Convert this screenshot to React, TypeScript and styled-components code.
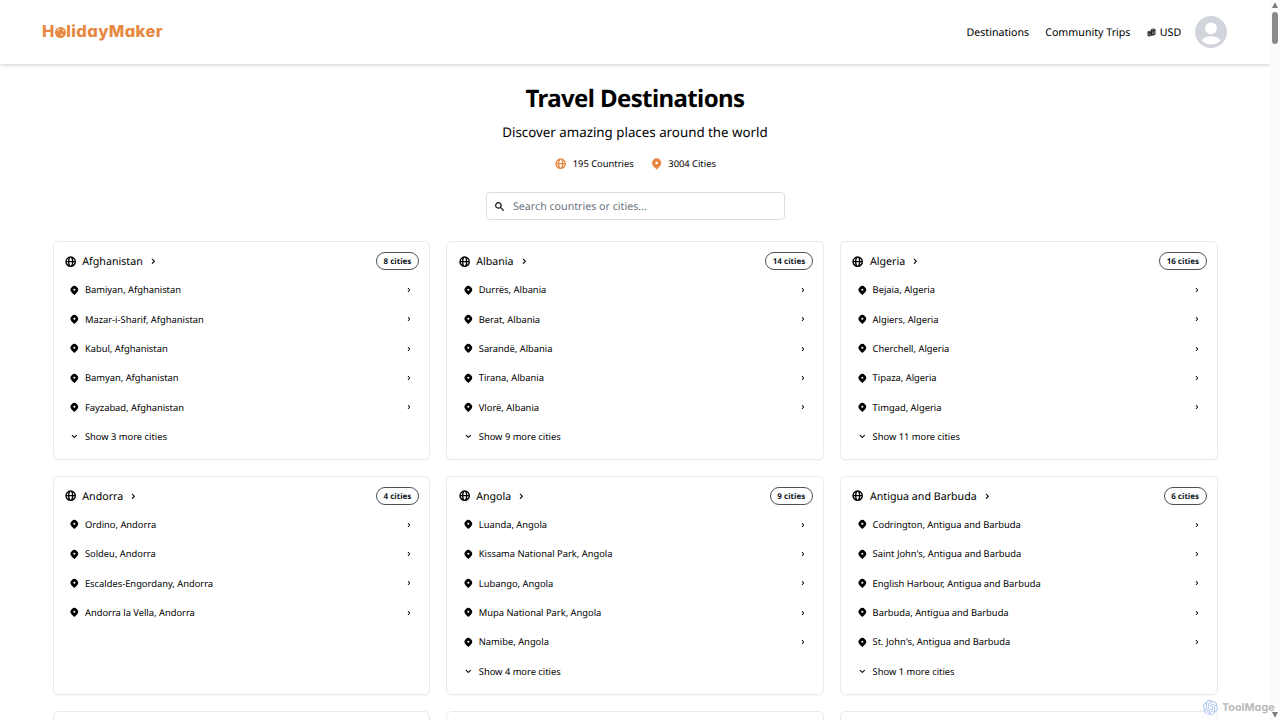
import React from "react";
import styled, { createGlobalStyle } from "styled-components";
import { HiGlobeAlt, HiLocationMarker, HiChevronRight, HiChevronDown, HiSearch } from "react-icons/hi";
import { SiOpenai } from "react-icons/si";

const Global = createGlobalStyle`
  *{box-sizing:border-box}
  html,body{margin:0;height:100%;overflow:hidden;background:#fff}
  body{font-family:"Noto Sans",sans-serif;color:#000;text-rendering:geometricPrecision}
  svg{display:block;flex:none}
`;
const Window = styled.div`display:flex;height:720px;width:1280px;position:relative;overflow:hidden;`;
const Page = styled.div`flex:1;min-width:0;height:720px;overflow:hidden;background:#fff;`;
const Scrollbar = styled.aside`
  width:10px;height:720px;background:#fcfcfc;display:flex;flex-direction:column;align-items:center;
  padding:3px 0;
`;
const Thumb = styled.div`width:6px;height:32px;border-radius:3px;background:#8b8b8b;margin:4px 0 auto;`;
const Header = styled.header`
  height:64px;display:flex;align-items:center;justify-content:space-between;
  padding:0 43px 0 42px;box-shadow:0 1px 4px rgba(0,0,0,.2);
`;
const Logo = styled.div`
  display:flex;align-items:center;font:800 16.5px/24px Inter,sans-serif;color:#e78842;letter-spacing:.38px;
  font-feature-settings:"cv11";padding-bottom:2px;
  svg{margin:2px .5px 0 0}
`;
const Nav = styled.nav`display:flex;align-items:center;gap:16px;font-size:10.67px;line-height:16px;`;
const NavText = styled.span`padding-top:2px;`;
const Currency = styled.span`display:flex;align-items:center;gap:3.7px;margin:0 -2.2px 0 .6px;`;
const Hero = styled.section`display:flex;flex-direction:column;align-items:center;padding-top:19px;`;
const Title = styled.h1`margin:0;font-size:24px;line-height:32px;font-weight:700;letter-spacing:-.6px;`;
const Subtitle = styled.p`margin:7px 0 0;font-size:13.33px;line-height:20px;`;
const Stats = styled.div`display:flex;gap:16px;margin-top:14px;font-size:9.33px;line-height:16px;`;
const Stat = styled.div`display:flex;align-items:center;gap:5.33px;svg{color:#e78842}`;
const Search = styled.div`
  width:299px;height:28px;margin-top:20px;border:1px solid #dcdee2;border-radius:4px;
  display:flex;align-items:center;gap:8.5px;padding-left:7px;font-size:10.67px;line-height:16px;color:#6b7280;
  svg{color:#000}
  span{padding-top:1px}
`;
const Grid = styled.main`
  display:grid;grid-template-columns:repeat(3,1fr);gap:16px;padding:0 52px 0 52.5px;margin-top:21.3px;
  grid-auto-rows:218.67px;
`;
const Card = styled.article`
  border:1px solid #e8eaed;border-radius:5.33px;padding:10px 10.3px 0;
  box-shadow:0 1px 1px rgba(0,0,0,.03);
`;
const CardHead = styled.header`display:flex;align-items:center;justify-content:space-between;height:18px;margin-bottom:5px;`;
const Country = styled.h2`
  display:flex;align-items:center;margin:0;font-size:10.67px;line-height:16px;font-weight:400;gap:5.2px;
  span{padding-top:1.8px}
`;
const Badge = styled.span`
  height:18px;border:1px solid #4b4f58;border-radius:9px;padding:0 6.67px;
  font-size:8px;line-height:17px;font-weight:700;color:#111827;
`;
const City = styled.div`
  display:flex;align-items:center;height:29.33px;padding:0 6px 0 5.3px;font-size:9.33px;gap:5.2px;
  span{flex:1}
`;
const Watermark = styled.div`
  position:absolute;left:1203px;top:699px;display:flex;align-items:center;gap:4px;
  font:700 10.8px/16px Inter,sans-serif;font-feature-settings:"cv11";color:#b9b9b9;white-space:nowrap;
  span{padding-top:1px}
  svg{color:#a9c3f3}
`;

const data: [string, number, string[]][] = [
  ["Afghanistan", 8, ["Bamiyan", "Mazar-i-Sharif", "Kabul", "Bamyan", "Fayzabad"]],
  ["Albania", 14, ["Durrës", "Berat", "Sarandë", "Tirana", "Vlorë"]],
  ["Algeria", 16, ["Bejaia", "Algiers", "Cherchell", "Tipaza", "Timgad"]],
  ["Andorra", 4, ["Ordino", "Soldeu", "Escaldes-Engordany", "Andorra la Vella"]],
  ["Angola", 9, ["Luanda", "Kissama National Park", "Lubango", "Mupa National Park", "Namibe"]],
  ["Antigua and Barbuda", 6, ["Codrington", "Saint John's", "English Harbour", "Barbuda", "St. John's"]],
];

const LogoGlobe = () => (
  <svg width="11" height="11" viewBox="0 0 22 22">
    <circle cx="11" cy="11" r="11" fill="#e78842" />
    <path d="M4 6 8 3l2.500 1-2 2-2.500 1-1.500 1.500z" fill="#fbe3d0" />
    <path d="M14 4l3.500 2 1.500 4-2.500-1z" fill="#fbe3d0" />
    <path d="M11.500 14l3-.5 1.500 1.500-2.500 3-1.500-1.500z" fill="#fbe3d0" />
  </svg>
);
const Coins = () => (
  <svg width="9" height="9" viewBox="0 0 18 18">
    <path d="M7.500 3.500Q8 1 12 .8T17 2.500V12Q16 15 8 15.500z" fill="#222" />
    <path d="M1 8Q2 5.500 5 5.500T8.500 7V14.500Q7 17 4.500 17T1 15.500z" fill="#222" />
    <path d="M9.500 3.800q3-1.600 5.500-.8M11.500 7v6M14.500 6v6M3 8q2-1 4-.5M3.500 11v4M6.300 11v4" fill="none" stroke="#fff" strokeWidth="1" />
  </svg>
);
const Avatar = () => (
  <svg width="32" height="32" viewBox="0 0 32 32">
    <circle cx="16" cy="16" r="16" fill="#d1d5db" />
    <circle cx="16" cy="12.300" r="5.900" fill="#fff" />
    <path d="M6.700 24.500C8.500 21.500 12 20.200 16 20.200s7.500 1.300 9.300 4.300C23 27.200 19.800 28.500 16 28.500S9 27.200 6.700 24.500z" fill="#fff" />
  </svg>
);
const Arrow = ({ down }: { down?: boolean }) => (
  <svg width="6" height="5" viewBox="0 0 6 5"><path d={down ? "M0 0h6L3.500 5h-1z" : "M0 5h6L3.500 0h-1z"} fill="#7d7d7d" /></svg>
);

export default function App() {
  return (
    <Window>
      <Global />
      <Page>
        <Header>
          <Logo>H<LogoGlobe />lidayMaker</Logo>
          <Nav>
            <NavText>Destinations</NavText>
            <NavText>Community Trips</NavText>
            <Currency><Coins /><NavText>USD</NavText></Currency>
            <Avatar />
          </Nav>
        </Header>
        <Hero>
          <Title>Travel Destinations</Title>
          <Subtitle>Discover amazing places around the world</Subtitle>
          <Stats>
            <Stat><HiGlobeAlt size={13.33} />195 Countries</Stat>
            <Stat><HiLocationMarker size={13.33} />3004 Cities</Stat>
          </Stats>
          <Search><HiSearch size={11} /><span>Search countries or cities...</span></Search>
        </Hero>
        <Grid>
          {data.map(([name, count, cities]) => (
            <Card key={name}>
              <CardHead>
                <Country><HiGlobeAlt size={13.33} /><span>{name}</span><HiChevronRight size={10.67} /></Country>
                <Badge>{count} cities</Badge>
              </CardHead>
              {cities.map((c) => (
                <City key={c}><HiLocationMarker size={10.67} /><span>{c}, {name}</span><HiChevronRight size={8} /></City>
              ))}
              {count > cities.length && <City><HiChevronDown size={10.67} /><span>Show {count - cities.length} more cities</span></City>}
            </Card>
          ))}
          <Card /><Card /><Card />
        </Grid>
      </Page>
      <Scrollbar><Arrow /><Thumb /><Arrow down /></Scrollbar>
      <Watermark><SiOpenai size={15} /><span>ToolMage</span></Watermark>
    </Window>
  );
}
